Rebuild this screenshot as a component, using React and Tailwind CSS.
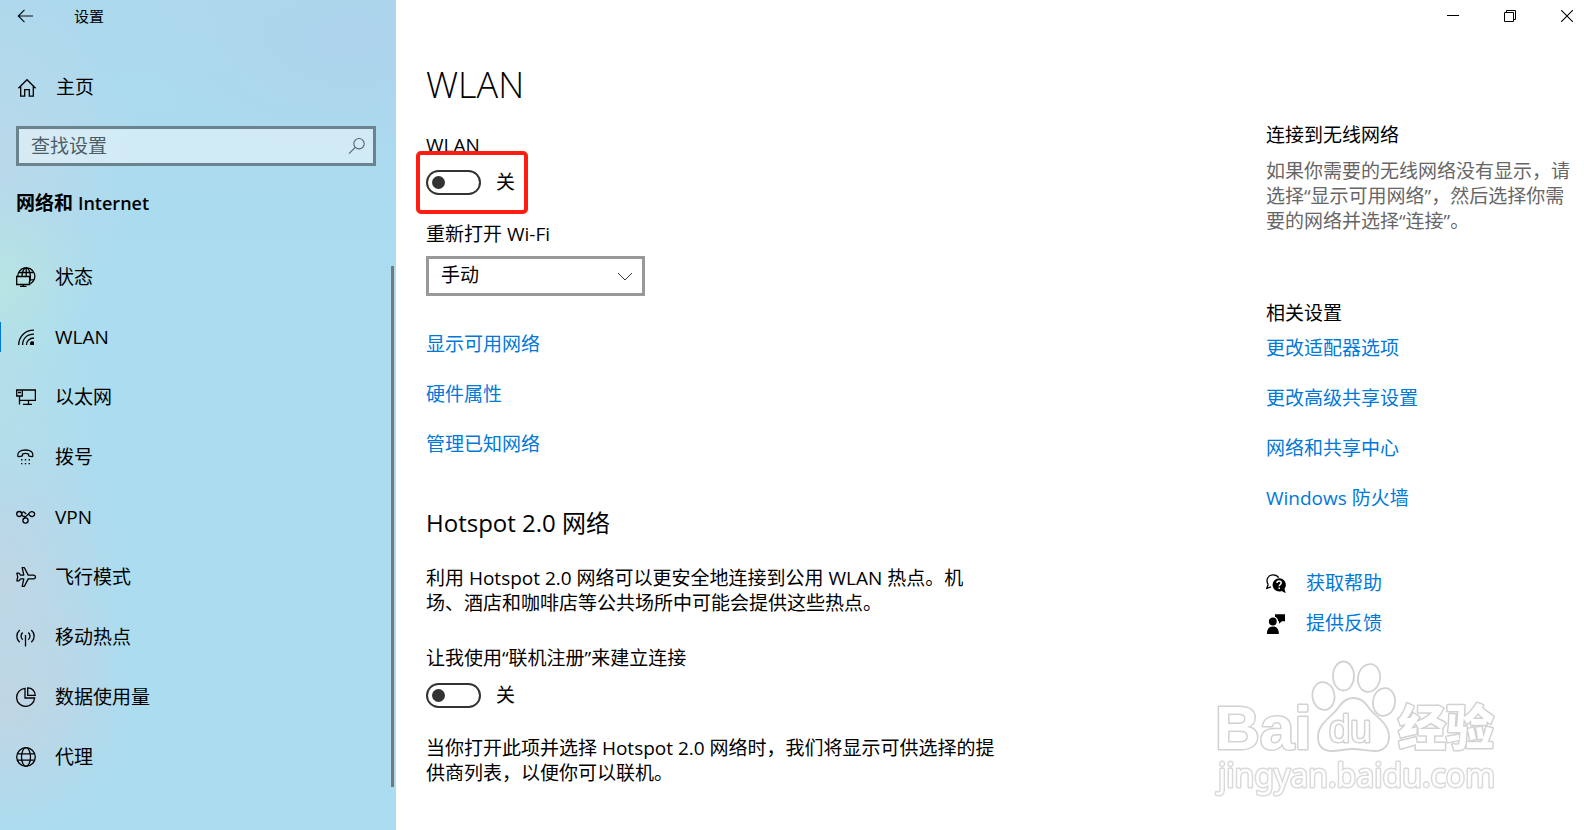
import React from "react";

function Icon({ children, className = "" }) {
  return (
    <svg
      aria-hidden="true"
      viewBox="0 0 20 20"
      className={`h-5 w-5 shrink-0 ${className}`}
      fill="none"
      stroke="currentColor"
      strokeWidth="1.3"
    >
      {children}
    </svg>
  );
}

const icons = {
  status: (
    <Icon>
      <path d="M1.8 9.5A8.5 8.5 0 1 1 14.5 16.7" />
      <path d="M2.9 5.5h14.4M14 12.8h4M6 9C6 5 8 .8 10.2.8S14.4 5 14.4 9.3c0 3-.6 5.5-1.4 7M10.2.8V9" />
      <path d="M.7 9.5h13v8H.7zM7.2 17.5v2M4 19.4h6.5" />
    </Icon>
  ),
  wlan: (
    <Icon>
      <path d="M2.7 18C2.7 9.500 9 3.200 18 3.200M6.600 18C6.600 11.500 11 7.100 18 7.100M10.500 18c0-4.200 3-7 7.500-7" />
      <path d="M14.300 18c0-2.200 1.400-3.400 3.700-3.400V18z" fill="currentColor" stroke="none" />
      <circle cx="15.9" cy="16.2" r="1.9" fill="currentColor" stroke="none" />
    </Icon>
  ),
  ethernet: (
    <Icon>
      <path d="M6 3h13.400v10.400H6M.7 3h5.600v6H.7zM3.500 9v8.400M2 5.500h3M12.500 13.400v3.800M7 17.400h9M6.300 13.400H3.500" />
    </Icon>
  ),
  dial: (
    <Icon>
      <path d="M1.800 8.800C1.200 5 4.500 3 9.500 3s8 2 7.300 5.800c-.1.700-.5 1-1 .9l-2.600-.5c-.5-.1-.7-.5-.7-1V7c-1.900-.7-4.200-.7-6 0v1.200c0 .5-.2.900-.7 1l-2.800.5c-.6.100-1.100-.2-1.200-.9z" />
      <path d="M5 12.700h1.400M8.800 12.700h1.400M12.600 12.700H14M5 16.600h1.400M8.800 16.600h1.400M12.600 16.600H14" strokeWidth="1.4" />
    </Icon>
  ),
  vpn: (
    <Icon>
      <circle cx="3.2" cy="7" r="2.5" />
      <circle cx="9.5" cy="13.5" r="2.6" />
      <path d="M5.700 7c0-1.500 1.300-2.600 2.600-1.800L10.200 7M7.200 12.200 14 5.400c1.600-1.600 4.700-.5 4.700 1.700s-3 3.200-4.600 1.600L12.800 7.500M5.700 7.500c.5 1.700 1.800 2.200 3.300 1.500" />
    </Icon>
  ),
  airplane: (
    <Icon>
      <path d="M12.200 8.100h5.200c2.700 0 2.700 3.800 0 3.800h-5.200L8.400 19.300H6.200l1.600-7.400H4.600l-1.700 2H.9l.8-3.900L.9 6.100h2l1.700 2h3.200L6.200.7h2.200z" strokeLinejoin="round" />
    </Icon>
  ),
  hotspot: (
    <Icon>
      <path d="M3.700 3C-.1 6.500-.1 11.800 3.700 15.300M6.700 5.600c-2.200 2-2.200 5.200 0 7.200M15.300 3c3.800 3.500 3.800 8.800 0 12.300M12.300 5.600c2.200 2 2.200 5.200 0 7.200M9.500 8v11.500" />
    </Icon>
  ),
  data: (
    <Icon>
      <path d="M9 1.400A9 9 0 1 0 18.600 11H9z" />
      <path d="M11.700.8v7.500h7.500C19.200 4 16 .8 11.700.8z" />
    </Icon>
  ),
  proxy: (
    <Icon>
      <circle cx="10" cy="10" r="9.3" />
      <ellipse cx="10" cy="10" rx="4.5" ry="9.3" />
      <path d="M1.400 6.800h17.200M1.400 13.200h17.200" />
    </Icon>
  ),
};

const navItems = [
  { id: "status", label: "状态" },
  { id: "wlan", label: "WLAN", active: true },
  { id: "ethernet", label: "以太网" },
  { id: "dial", label: "拨号" },
  { id: "vpn", label: "VPN" },
  { id: "airplane", label: "飞行模式" },
  { id: "hotspot", label: "移动热点" },
  { id: "data", label: "数据使用量" },
  { id: "proxy", label: "代理" },
];

const relatedLinks = ["更改适配器选项", "更改高级共享设置", "网络和共享中心", "Windows 防火墙"];
const wlanLinks = ["显示可用网络", "硬件属性", "管理已知网络"];

function Toggle({ id, label }) {
  return (
    <div className="flex items-center gap-[15px]">
      <input
        id={id}
        type="checkbox"
        role="switch"
        aria-label={label}
        className="flex h-[25px] w-[55px] shrink-0 appearance-none items-center rounded-full border-2 border-[#333] bg-white pl-1 before:block before:h-[13px] before:w-[13px] before:rounded-full before:bg-[#333] checked:justify-end checked:pr-1"
      />
      <label htmlFor={id}>关</label>
    </div>
  );
}

function Sidebar() {
  return (
    <aside className="flex w-[396px] shrink-0 flex-col bg-[#abdcf0] bg-[radial-gradient(circle_at_0px_285px,#b8e4e3_0px,transparent_100px),radial-gradient(circle_at_0px_400px,#b5dfe8_0px,transparent_110px),radial-gradient(ellipse_130px_190px_at_0px_580px,#c0d6e4_0%,transparent_100%),radial-gradient(ellipse_130px_140px_at_10px_700px,#c0d5e3_0%,transparent_100%),radial-gradient(ellipse_140px_180px_at_0px_160px,#bad9ea_0%,transparent_100%),radial-gradient(ellipse_200px_130px_at_350px_40px,#add4ec_0%,transparent_100%),linear-gradient(180deg,#add8ec_0px,#abdaee_120px,#abdcf0_300px)]">
      <div className="flex h-8 items-center gap-[39px] pl-[17px]">
        <button type="button" aria-label="返回" className="flex">
          <svg aria-hidden="true" viewBox="0 0 18 16" className="h-4 w-[18px]" fill="none" stroke="#111" strokeWidth="1.2">
            <path d="M16 8H1.500M7.500 1.800 1.300 8l6.200 6.200" />
          </svg>
        </button>
        <span className="text-[15px] leading-5">设置</span>
      </div>
      <a href="#home" className="mt-[43px] flex items-center gap-[19px] pl-[17px] leading-[25px]">
        <Icon>
          <path d="M1.400 10.200 10 1.700l8.600 8.500M3.700 8.300v9.900h4v-6.500h4.600v6.500h4V8.300" />
        </Icon>
        主页
      </a>
      <div className="ml-4 mr-5 mt-[26px] flex h-10 items-center border-3 border-[#6b838f] bg-white/45 pl-3 pr-[7px]">
        <input
          type="search"
          aria-label="查找设置"
          placeholder="查找设置"
          className="min-w-0 flex-1 bg-transparent leading-[25px] outline-none placeholder:text-[#4d5d66]"
        />
        <svg aria-hidden="true" viewBox="0 0 18 18" className="h-[18px] w-[18px]" fill="none" stroke="#53646d" strokeWidth="1.1">
          <circle cx="11" cy="6.7" r="5.2" />
          <path d="M7.300 10.400 1 16.700" />
        </svg>
      </div>
      <h2 className="ml-4 mt-[25px] font-bold leading-[25px]">
        网络和 <span className="text-[18px] font-semibold">Internet</span>
      </h2>
      <nav className="mt-[31px] flex flex-col">
        {navItems.map((item) => (
          <a
            key={item.id}
            href={`#${item.id}`}
            aria-current={item.active ? "page" : undefined}
            className="relative flex h-[60px] items-center gap-[19px] pl-4"
          >
            {item.active && <span className="absolute left-0 h-[30px] w-px bg-[#0078d7]" />}
            {icons[item.id]}
            {item.label}
          </a>
        ))}
      </nav>
    </aside>
  );
}

function WindowControls() {
  return (
    <div className="flex h-8 justify-end gap-[23px] text-black">
      <button type="button" aria-label="最小化" className="flex w-[34px] items-center justify-center">
        <svg viewBox="0 0 12 12" className="h-3 w-3" stroke="currentColor"><path d="M0 5.500h12" /></svg>
      </button>
      <button type="button" aria-label="还原" className="flex w-[34px] items-center justify-center">
        <svg viewBox="0 0 12 12" className="h-3 w-3" fill="none" stroke="currentColor">
          <path d="M.5 2.500h9v9h-9zM2.500 2.500v-2h9v9h-2" />
        </svg>
      </button>
      <button type="button" aria-label="关闭" className="flex w-[34px] items-center justify-center">
        <svg viewBox="0 0 12 12" className="h-3 w-3" stroke="currentColor" strokeWidth="1.1"><path d="m0 0 12 12M12 0 0 12" /></svg>
      </button>
    </div>
  );
}

function Watermark() {
  return (
    <svg
      viewBox="0 0 300 150"
      aria-label="Baidu 经验"
      className="pointer-events-none absolute bottom-[25px] right-[74px] h-[150px] w-[300px] blur-[0.5px]"
      fill="#fff"
      stroke="#d2d2d2"
      strokeWidth="1.8"
    >
      <g>
        <ellipse cx="113.5" cy="41" rx="11" ry="14" transform="rotate(-8 113.5 41)" />
        <ellipse cx="133.5" cy="21" rx="10.5" ry="14.5" />
        <ellipse cx="159" cy="23" rx="11" ry="14" transform="rotate(10 159 23)" />
        <ellipse cx="174" cy="47" rx="11" ry="14" transform="rotate(8 174 47)" />
        <path d="M143 43c8 0 12 4 16 10 5 8 20 14 20 29 0 9-6 14-14 14-9 0-14-2-22-2s-13 2-21 2c-9 0-14-5-14-14 0-14 14-20 20-29 4-6 8-10 15-10z" />
      </g>
      <g paintOrder="stroke" strokeWidth="3" strokeLinejoin="round" className="font-['Liberation_Sans',sans-serif]">
        <text x="5" y="94" fontSize="62" fontWeight="700">Bai</text>
        <text x="119" y="87" fontSize="38">du</text>
        <text x="188" y="90" fontSize="48" fontWeight="900" className="font-['Noto_Sans_CJK_SC',sans-serif]">经验</text>
        <text x="8" y="132" fontSize="32" stroke="#dadada" className="font-['Noto_Sans',sans-serif]">jingyan.baidu.com</text>
      </g>
    </svg>
  );
}

export default function App() {
  return (
    <div className="flex min-h-screen bg-white font-['Open_Sans','Noto_Sans_CJK_SC',sans-serif] text-[19px] text-black">
      <Sidebar />
      <div className="-ml-[5px] mt-[266px] mb-[43px] w-[3px] shrink-0 bg-[#76797c]" />
      <div className="relative flex min-w-0 flex-1 flex-col">
        <WindowControls />
        <div className="flex flex-1 justify-between pl-8 leading-[25px]">
          <main className="w-[570px] pt-[29px]">
            <h1 className="text-[36px] font-light leading-[48px]">WLAN</h1>
            <div className="mt-6">WLAN</div>
            <div className="relative mt-3 w-fit">
              <Toggle id="wlan-switch" label="WLAN" />
              <div className="pointer-events-none absolute -bottom-[19px] -left-[10px] -right-[13px] -top-[19px] rounded-[5px] border-4 border-[#ff1d12]" />
            </div>
            <label htmlFor="reopen" className="mt-[27px] block">重新打开 Wi-Fi</label>
            <div className="relative mt-[9px] w-[219px]">
              <select id="reopen" className="block h-10 w-full appearance-none border-3 border-[#999] bg-white pb-[2px] pl-3 leading-[25px]">
                <option>手动</option>
              </select>
              <svg aria-hidden="true" viewBox="0 0 16 10" className="pointer-events-none absolute right-3 top-4 h-[10px] w-4" fill="none" stroke="#333">
                <path d="m1 1 7 7 7-7" />
              </svg>
            </div>
            <div className="mt-9 flex flex-col items-start gap-[25px] text-[#0078d7]">
              {wlanLinks.map((text) => (
                <a key={text} href="#wlan">{text}</a>
              ))}
            </div>
            <h2 className="mt-[50px] text-[24px] leading-8">Hotspot 2.0 网络</h2>
            <p className="mt-[27px]">
              利用 Hotspot 2.0 网络可以更安全地连接到公用 WLAN 热点。机场、酒店和咖啡店等公共场所中可能会提供这些热点。
            </p>
            <div className="mb-3 mt-[30px]">让我使用“联机注册”来建立连接</div>
            <Toggle id="signup-switch" label="联机注册" />
            <p className="mt-7">
              当你打开此项并选择 Hotspot 2.0 网络时，我们将显示可供选择的提供商列表，以便你可以联机。
            </p>
          </main>
          <section className="w-[318px] shrink-0 pt-[91px]">
            <h3>连接到无线网络</h3>
            <p className="mt-[11px] pr-3 text-[#666]">
              如果你需要的无线网络没有显示，请选择“显示可用网络”，然后选择你需要的网络并选择“连接”。
            </p>
            <h3 className="mt-[67px]">相关设置</h3>
            <div className="mt-[10px] flex flex-col items-start gap-[25px] text-[#0078d7]">
              {relatedLinks.map((text) => (
                <a key={text} href="#related">{text}</a>
              ))}
            </div>
            <div className="mt-[60px] flex flex-col items-start gap-[15px]">
              <a href="#help" className="flex items-center gap-5 text-[#0078d7]">
                <Icon className="text-black">
                  <path d="M2.200 10.500C-.8 5.500 2.500.8 7 .8c2.700 0 4.600 1 5.700 2.900M2.200 10.500.8 14.300l4.200-1.500" />
                  <path d="M13 4.200a6.600 6.600 0 1 0 2.700 12.700l4 2.300-1.200-4.500A6.600 6.600 0 0 0 13 4.200z" fill="currentColor" stroke="none" />
                  <path d="M11 9c0-2.700 4.200-2.700 4.200-.2 0 1.700-2 1.700-2 3.500M13.200 13.500v1.500" stroke="#fff" strokeWidth="1.5" />
                </Icon>
                获取帮助
              </a>
              <a href="#feedback" className="flex items-center gap-5 text-[#0078d7]">
                <Icon className="text-black">
                  <g fill="currentColor" stroke="none">
                    <circle cx="6.8" cy="7.5" r="3.9" />
                    <path d="M1 20c0-5 2-7.500 5.900-7.500s6 2.500 6 7.500zM9 .3h10v7h-3l-3 2.500V7.300h-.8C12 5 11 3.500 9 2.700z" />
                  </g>
                </Icon>
                提供反馈
              </a>
            </div>
          </section>
        </div>
        <Watermark />
      </div>
    </div>
  );
}
